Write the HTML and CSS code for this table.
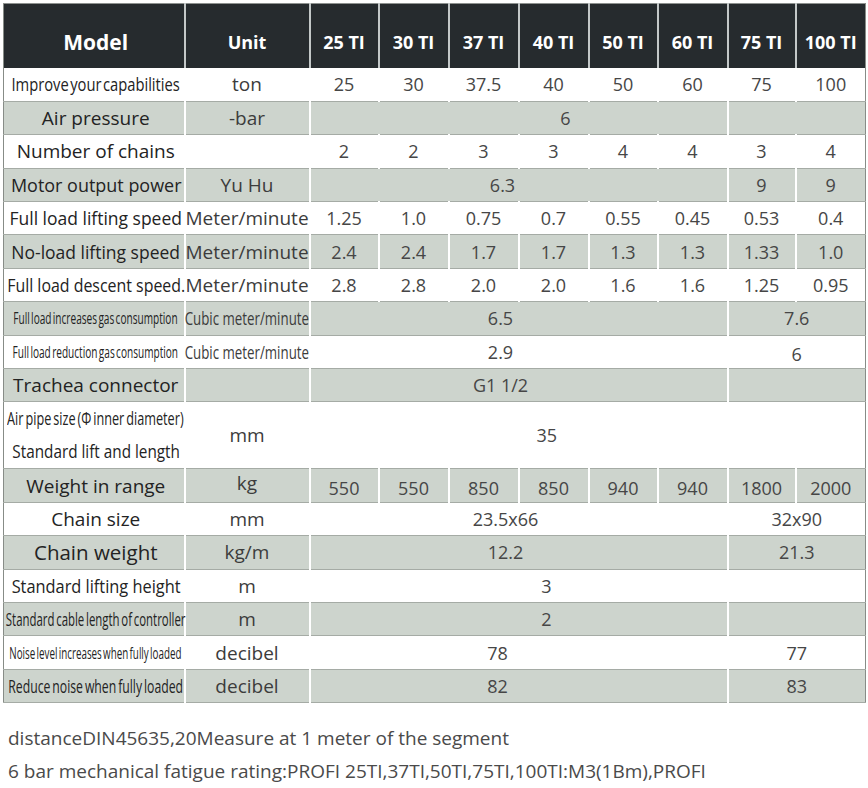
FILE: index.html
```html
<!DOCTYPE html>
<html lang="en">
<head>
<meta charset="utf-8">
<title>Specification</title>
<link rel="stylesheet" href="styles.css">
</head>
<body>
<div class="page">
<table class="spec">
  <colgroup>
    <col class="c-model"><col class="c-unit">
    <col class="c-69"><col class="c-70"><col class="c-70"><col class="c-70">
    <col class="c-69"><col class="c-70"><col class="c-68"><col class="c-70">
  </colgroup>
  <thead>
    <tr>
      <th class="h-model">Model</th><th>Unit</th><th>25 TI</th><th>30 TI</th><th>37 TI</th><th>40 TI</th><th>50 TI</th><th>60 TI</th><th>75 TI</th><th>100 TI</th>
    </tr>
  </thead>
  <tbody>
    <tr class="w">
      <td class="lab"><div class="fit"><span class="sq sq-a">Improve your capabilities</span></div></td>
      <td class="unit">ton</td>
      <td>25</td><td>30</td><td>37.5</td><td>40</td><td>50</td><td>60</td><td>75</td><td>100</td>
    </tr>
    <tr class="g">
      <td class="lab">Air pressure</td>
      <td class="unit">-bar</td>
      <td colspan="6" class="r47">6</td><td colspan="2"></td>
    </tr>
    <tr class="w">
      <td class="lab">Number of chains</td>
      <td class="unit"></td>
      <td>2</td><td>2</td><td>3</td><td>3</td><td>4</td><td>4</td><td>3</td><td>4</td>
    </tr>
    <tr class="g">
      <td class="lab"><div class="fit"><span class="sq sq-n">Motor output power</span></div></td>
      <td class="unit">Yu Hu</td>
      <td colspan="6" class="l16">6.3</td><td>9</td><td>9</td>
    </tr>
    <tr class="w">
      <td class="lab"><div class="fit"><span class="sq sq-b">Full load lifting speed</span></div></td>
      <td class="unit">Meter/minute</td>
      <td>1.25</td><td>1.0</td><td>0.75</td><td>0.7</td><td>0.55</td><td>0.45</td><td>0.53</td><td>0.4</td>
    </tr>
    <tr class="g">
      <td class="lab"><div class="fit"><span class="sq sq-b">No-load lifting speed</span></div></td>
      <td class="unit">Meter/minute</td>
      <td>2.4</td><td>2.4</td><td>1.7</td><td>1.7</td><td>1.3</td><td>1.3</td><td>1.33</td><td>1.0</td>
    </tr>
    <tr class="w">
      <td class="lab"><div class="fit"><span class="sq sq-c">Full load descent speed.</span></div></td>
      <td class="unit">Meter/minute</td>
      <td>2.8</td><td>2.8</td><td>2.0</td><td>2.0</td><td>1.6</td><td>1.6</td><td>1.25</td><td>0.95</td>
    </tr>
    <tr class="g">
      <td class="lab"><div class="fit small"><span class="sq sq-d">Full load increases gas consumption</span></div></td>
      <td class="unit"><div class="fit"><span class="sq sq-e">Cubic meter/minute</span></div></td>
      <td colspan="6" class="l18">6.5</td><td colspan="2">7.6</td>
    </tr>
    <tr class="w">
      <td class="lab"><div class="fit small"><span class="sq sq-d">Full load reduction gas consumption</span></div></td>
      <td class="unit"><div class="fit"><span class="sq sq-e">Cubic meter/minute</span></div></td>
      <td colspan="6" class="l18">2.9</td><td colspan="2" class="low">6</td>
    </tr>
    <tr class="g">
      <td class="lab">Trachea connector</td>
      <td class="unit"></td>
      <td colspan="6" class="l18">G1 1/2</td><td colspan="2"></td>
    </tr>
    <tr class="w tall">
      <td class="lab">
        <div class="fit line"><span class="sq sq-f">Air pipe size (&Phi; inner diameter)</span></div>
        <div class="fit line"><span class="sq sq-g">Standard lift and length</span></div>
      </td>
      <td class="unit">mm</td>
      <td colspan="8" class="l41">35</td>
    </tr>
    <tr class="g">
      <td class="lab">Weight in range</td>
      <td class="unit up">kg</td>
      <td class="low">550</td><td class="low">550</td><td class="low">850</td><td class="low">850</td><td class="low">940</td><td class="low">940</td><td class="low">1800</td><td class="low">2000</td>
    </tr>
    <tr class="w">
      <td class="lab">Chain size</td>
      <td class="unit">mm</td>
      <td colspan="6" class="l13">23.5x66</td><td colspan="2">32x90</td>
    </tr>
    <tr class="g">
      <td class="lab big">Chain weight</td>
      <td class="unit">kg/m</td>
      <td colspan="6" class="l13">12.2</td><td colspan="2">21.3</td>
    </tr>
    <tr class="w">
      <td class="lab"><div class="fit"><span class="sq sq-h">Standard lifting height</span></div></td>
      <td class="unit">m</td>
      <td colspan="6" class="r28">3</td><td colspan="2"></td>
    </tr>
    <tr class="g">
      <td class="lab"><div class="fit"><span class="sq sq-i">Standard cable length of controller</span></div></td>
      <td class="unit">m</td>
      <td colspan="6" class="r28">2</td><td colspan="2"></td>
    </tr>
    <tr class="w">
      <td class="lab"><div class="fit small"><span class="sq sq-j">Noise level increases when fully loaded</span></div></td>
      <td class="unit">decibel</td>
      <td colspan="6" class="l21">78</td><td colspan="2">77</td>
    </tr>
    <tr class="g">
      <td class="lab"><div class="fit"><span class="sq sq-k">Reduce noise when fully loaded</span></div></td>
      <td class="unit">decibel</td>
      <td colspan="6" class="l21">82</td><td colspan="2">83</td>
    </tr>
  </tbody>
</table>
<div class="notes">
  <p>distanceDIN45635,20Measure at 1 meter of the segment</p>
  <p>6 bar mechanical fatigue rating:PROFI 25TI,37TI,50TI,75TI,100TI:M3(1Bm),PROFI</p>
</div>
</div>
</body>
</html>
```

FILE: styles.css
```css
html, body {
  margin: 0;
  padding: 0;
  background: #ffffff;
}

body {
  font-family: "Open Sans", "Noto Sans", "Liberation Sans", sans-serif;
}

.page {
  padding: 3px 3px 0 3px;
}

.spec {
  border-collapse: collapse;
  table-layout: fixed;
  width: 862px;
}

.c-model { width: 181px; }
.c-unit { width: 125px; }
.c-68 { width: 68px; }
.c-69 { width: 69px; }
.c-70 { width: 70px; }

.spec th {
  height: 52px;
  padding: 12px 0 0 0;
  background: #262b2e;
  color: #ffffff;
  font-size: 18px;
  font-weight: 700;
  text-align: center;
  vertical-align: middle;
  border-top: 1px solid #8d918f;
  border-left: 2px solid #c3c8c8;
  white-space: nowrap;
}

.spec th.h-model {
  font-size: 21px;
  padding-left: 4px;
}

.spec tr {
  height: 33.4px;
}

.spec tr.tall {
  height: 66.8px;
}

.spec td {
  padding: 0;
  font-size: 18px;
  color: #464646;
  text-align: center;
  vertical-align: middle;
  white-space: nowrap;
  overflow: visible;
  border-left: 2px solid #ffffff;
  border-bottom: 1px solid #a5aba5;
}

.spec tr > :first-child {
  border-left: 1px solid #878c87;
}

.spec tr > :last-child {
  border-right: 1px solid #878c87;
}

.spec .g td {
  background: #cdd4cd;
}

.spec td.lab {
  color: #232323;
  font-size: 19px;
  padding-left: 4px;
}

.spec td.lab.big {
  font-size: 20.5px;
}

.spec td.unit {
  color: #3c3c3c;
  font-size: 19px;
}

.fit {
  display: flex;
  justify-content: center;
}

.spec td .fit.small {
  font-size: 16px;
}

.fit.line {
  height: 33px;
  line-height: 33px;
}

.sq {
  flex: none;
  white-space: nowrap;
}

.sq-a { transform: scaleX(0.775); word-spacing: -3px; }
.sq-b { transform: scaleX(0.92); }
.sq-c { transform: scaleX(0.838); }
.sq-d { transform: scaleX(0.63); word-spacing: -2px; }
.sq-e { transform: scaleX(0.70); }
.sq-f { transform: scaleX(0.667); word-spacing: -2px; }
.sq-g { transform: scaleX(0.805); }
.sq-h { transform: scaleX(0.861); }
.sq-i { transform: scaleX(0.60); word-spacing: -2px; }
.sq-j { transform: scaleX(0.613); word-spacing: -2px; }
.sq-k { transform: scaleX(0.644); word-spacing: -2px; }
.sq-n { transform: scaleX(0.945); }

.r47 { padding-left: 94px !important; }
.r28 { padding-left: 56px !important; }
.l13 { padding-right: 26px !important; }
.l16 { padding-right: 32px !important; }
.l18 { padding-right: 36px !important; }
.l21 { padding-right: 42px !important; }
.l41 { padding-right: 82px !important; }

.spec td.low { padding-top: 5px; }
.spec td.up { padding-bottom: 5px; }

.notes {
  margin: 19px 0 0 5px;
  font-size: 19px;
  line-height: 33px;
  color: #4a4a4a;
}

.notes p {
  margin: 0;
}
```
